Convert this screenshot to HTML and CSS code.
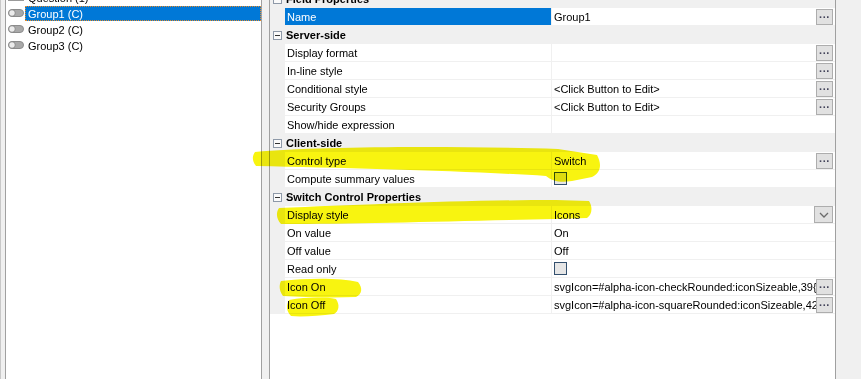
FILE: index.html
```html
<!DOCTYPE html>
<html lang="en">
<head>
    <meta charset="UTF-8">
    <title>Field Properties</title>
    <link rel="stylesheet" href="styles.css">
</head>
<body>
    <div class="app">
        <div class="tree-pane">
            <ul class="tree">
                <li class="tree-item"><span class="node-icon field"></span><span class="label">Question (1)</span></li>
                <li class="tree-item"><svg class="node-icon" width="16" height="8" viewBox="0 0 16 8"><rect x="0.5" y="0.5" width="15" height="7" rx="3.5" fill="#a9a9a9" stroke="#8c8c8c"/><circle cx="4" cy="4" r="3.3" fill="#ececec" stroke="#7d7d7d" stroke-width="0.8"/></svg><span class="label selected">Group1 (C)</span></li>
                <li class="tree-item"><svg class="node-icon" width="16" height="8" viewBox="0 0 16 8"><rect x="0.5" y="0.5" width="15" height="7" rx="3.5" fill="#a9a9a9" stroke="#8c8c8c"/><circle cx="4" cy="4" r="3.3" fill="#ececec" stroke="#7d7d7d" stroke-width="0.8"/></svg><span class="label">Group2 (C)</span></li>
                <li class="tree-item"><svg class="node-icon" width="16" height="8" viewBox="0 0 16 8"><rect x="0.5" y="0.5" width="15" height="7" rx="3.5" fill="#a9a9a9" stroke="#8c8c8c"/><circle cx="4" cy="4" r="3.3" fill="#ececec" stroke="#7d7d7d" stroke-width="0.8"/></svg><span class="label">Group3 (C)</span></li>
            </ul>
        </div>
        <div class="splitter"></div>
        <div class="grid-pane">
            <div class="grid">
                <div class="cat-row"><span class="collapse"></span><span class="cat-title">Field Properties</span></div>
                <div class="prop-row">
                    <span class="gutter"></span><span class="name selected">Name</span>
                    <span class="value">Group1<button class="ellipsis">···</button></span>
                </div>

                <div class="cat-row"><span class="collapse"></span><span class="cat-title">Server-side</span></div>
                <div class="prop-row">
                    <span class="gutter"></span><span class="name">Display format</span>
                    <span class="value"><button class="ellipsis">···</button></span>
                </div>
                <div class="prop-row">
                    <span class="gutter"></span><span class="name">In-line style</span>
                    <span class="value"><button class="ellipsis">···</button></span>
                </div>
                <div class="prop-row">
                    <span class="gutter"></span><span class="name">Conditional style</span>
                    <span class="value">&lt;Click Button to Edit&gt;<button class="ellipsis">···</button></span>
                </div>
                <div class="prop-row">
                    <span class="gutter"></span><span class="name">Security Groups</span>
                    <span class="value">&lt;Click Button to Edit&gt;<button class="ellipsis">···</button></span>
                </div>
                <div class="prop-row">
                    <span class="gutter"></span><span class="name">Show/hide expression</span>
                    <span class="value"></span>
                </div>

                <div class="cat-row"><span class="collapse"></span><span class="cat-title">Client-side</span></div>
                <div class="prop-row">
                    <span class="gutter"></span><span class="name">Control type</span>
                    <span class="value">Switch<button class="ellipsis">···</button></span>
                </div>
                <div class="prop-row">
                    <span class="gutter"></span><span class="name">Compute summary values</span>
                    <span class="value"><span class="checkbox"></span></span>
                </div>

                <div class="cat-row"><span class="collapse"></span><span class="cat-title">Switch Control Properties</span></div>
                <div class="prop-row">
                    <span class="gutter"></span><span class="name">Display style</span>
                    <span class="value">Icons<button class="dropdown"><svg width="10" height="6" viewBox="0 0 10 6"><path d="M1 1 L5 5 L9 1" fill="none" stroke="#6b6b6b" stroke-width="1.3"/></svg></button></span>
                </div>
                <div class="prop-row">
                    <span class="gutter"></span><span class="name">On value</span>
                    <span class="value">On</span>
                </div>
                <div class="prop-row">
                    <span class="gutter"></span><span class="name">Off value</span>
                    <span class="value">Off</span>
                </div>
                <div class="prop-row">
                    <span class="gutter"></span><span class="name">Read only</span>
                    <span class="value"><span class="checkbox"></span></span>
                </div>
                <div class="prop-row">
                    <span class="gutter"></span><span class="name">Icon On</span>
                    <span class="value"><span class="clip">svgIcon=#alpha-icon-checkRounded:iconSizeable,39{</span><button class="ellipsis">···</button></span>
                </div>
                <div class="prop-row">
                    <span class="gutter"></span><span class="name">Icon Off</span>
                    <span class="value"><span class="clip">svgIcon=#alpha-icon-squareRounded:iconSizeable,42{</span><button class="ellipsis">···</button></span>
                </div>
            </div>
        </div>
        <div class="right-strip"></div>

        <!-- marker strokes drawn over the screenshot -->
        <svg class="marker" width="861" height="379" viewBox="0 0 861 379">
            <path d="M255 152 C320 146 460 146 558 149 L597 155 C602 164 601 173 592 177 L572 181 C560 183 552 181 546 176 C470 171 350 168 256 166 C252 161 252 156 255 152 Z"/>
            <path d="M279 208 C360 205 460 200 556 200 L589 201 C593 207 592 215 587 218 L556 219 C460 221 360 224 281 224 C276 219 276 212 279 208 Z"/>
            <path d="M281 281 C310 278 340 278 358 282 C363 288 362 294 356 297 C330 298 302 297 283 296 C279 291 279 285 281 281 Z"/>
            <path d="M289 300 C306 297 325 297 336 299 C340 305 339 311 334 314 C318 316 301 317 291 316 C286 311 286 305 289 300 Z"/>
        </svg>
    </div>
</body>
</html>
```

FILE: styles.css
```css
body {
    margin: 0;
    font-family: "Liberation Sans", Arial, sans-serif;
    font-size: 11px;
    color: #000;
    background-color: #f0f0f0;
}
.app {
    position: relative;
    display: flex;
    height: 379px;
    overflow: hidden;
}

/* left tree */
.tree-pane {
    display: flex;
    width: 262px;
    box-sizing: border-box;
    border-left: 1px solid #c8c8c8;
    padding-left: 4px;
}
.tree {
    flex: 1;
    margin: 0;
    padding: 0 0 0 2px;
    list-style: none;
    background: white;
    border-left: 1px solid #a0a0a0;
    border-right: 1px solid #a0a0a0;
    overflow: hidden;
}
.tree-item {
    display: flex;
    align-items: center;
    height: 16px;
}
.tree-item:first-child {
    margin-top: -11px;
}
.node-icon {
    flex: none;
    width: 16px;
    height: 8px;
}
.node-icon.field {
    background: #9a9a9a;
}
.label {
    flex: 1;
    margin-left: 1px;
    padding-left: 2px;
    height: 15px;
    line-height: 14px;
    box-sizing: border-box;
    border: 1px solid transparent;
}
.label.selected {
    background: #0078d7;
    color: white;
    border: 1px dotted #e58b2a;
}

.splitter {
    width: 7px;
}

/* property grid */
.grid-pane {
    width: 567px;
    box-sizing: border-box;
    border-left: 1px solid #a0a0a0;
    border-right: 1px solid #a0a0a0;
    background: white;
    overflow: hidden;
}
.grid {
    margin-top: -10px;
}
.cat-row, .prop-row {
    display: flex;
    height: 18px;
    box-sizing: border-box;
    line-height: 17px;
}
.cat-row {
    align-items: center;
    background: #f0f0f0;
    padding-left: 3px;
}
.collapse {
    position: relative;
    width: 9px;
    height: 9px;
    box-sizing: border-box;
    border: 1px solid #8e99a8;
    background: #fafafa;
}
.collapse::after {
    content: "";
    position: absolute;
    left: 1px;
    top: 3px;
    width: 5px;
    height: 1px;
    background: #333;
}
.cat-title {
    margin-left: 4px;
    font-weight: bold;
}
.gutter {
    width: 15px;
    flex: none;
    background: #f0f0f0;
}
.name {
    width: 267px;
    flex: none;
    box-sizing: border-box;
    padding: 1px 0 0 2px;
    border-right: 1px solid #f0f0f0;
    border-bottom: 1px solid #f0f0f0;
    line-height: 16px;
    white-space: nowrap;
}
.name.selected {
    background: #0078d7;
    color: white;
}
.value {
    flex: 1;
    display: flex;
    align-items: center;
    padding: 1px 2px 0 2px;
    border-bottom: 1px solid #f0f0f0;
    line-height: 16px;
    white-space: nowrap;
    overflow: hidden;
}
.clip {
    flex: 1;
    overflow: hidden;
}
.ellipsis, .dropdown {
    margin: -1px 0 0 auto;
    flex: none;
    width: 17px;
    height: 16px;
    padding: 0;
    box-sizing: border-box;
    border: 1px solid #adadad;
    background: #e1e1e1;
    font-family: "Liberation Sans", Arial, sans-serif;
    font-size: 11px;
    font-weight: bold;
    line-height: 12px;
    color: #44445a;
    letter-spacing: 0;
}
.clip + .ellipsis {
    margin-left: 0;
}
.dropdown {
    width: 19px;
    height: 17px;
    display: flex;
    align-items: center;
    justify-content: center;
}
.checkbox {
    width: 13px;
    height: 13px;
    margin-top: -1px;
    box-sizing: border-box;
    border: 1px solid #33506e;
    background: #e6e6e6;
}

.right-strip {
    flex: 1;
}

/* yellow highlighter on top */
.marker {
    position: absolute;
    left: 0;
    top: 0;
    pointer-events: none;
    mix-blend-mode: multiply;
    fill: #f8f410;
}
```
